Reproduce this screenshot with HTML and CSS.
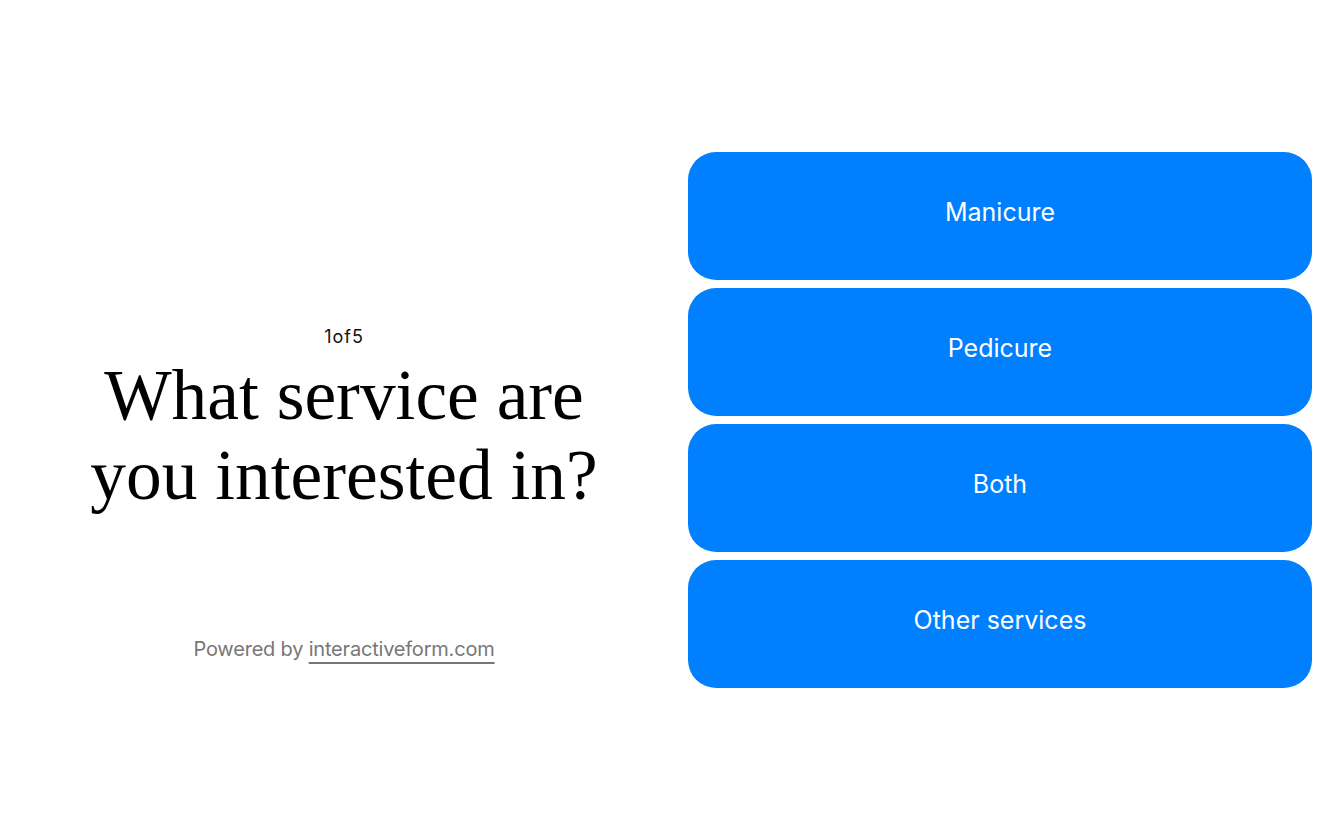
FILE: index.html
```html
<!DOCTYPE html>
<html>

<head>
    <meta charset="utf-8">
    <title>What service are you interested in?</title>
    <link rel="stylesheet" href="styles.css">
</head>

<body>
    <main class="form">
        <section class="question">
            <div class="question_body">
                <p class="step">1of5</p>
                <h1 class="title">What service are you interested in?</h1>
            </div>
            <p class="powered">Powered by <a href="#" class="powered_link">interactiveform.com</a></p>
        </section>
        <section class="answers">
            <button class="answer">Manicure</button>
            <button class="answer">Pedicure</button>
            <button class="answer">Both</button>
            <button class="answer">Other services</button>
        </section>
    </main>
</body>

</html>
```

FILE: styles.css
```css
html,
body {
    margin: 0;
    padding: 0;
    background: #ffffff
}

body {
    font-family: Inter, "Liberation Sans", sans-serif
}

.form {
    display: flex;
    align-items: center;
    height: 840px;
    padding-right: 32px
}

.question {
    width: 688px;
    display: flex;
    flex-direction: column;
    align-items: center;
    text-align: center;
    padding-top: 146px
}

.question_body {
    display: flex;
    flex-direction: column;
    align-items: center
}

.step {
    margin: 0;
    font-size: 18px;
    letter-spacing: 1px;
    color: #111111
}

.title {
    margin: 8px 0 0;
    font-family: "Liberation Serif", "Times New Roman", serif;
    font-weight: normal;
    font-size: 71.4px;
    line-height: 80px;
    color: #000000;
    width: 560px
}

.powered {
    margin: 122px 0 0;
    font-size: 20px;
    letter-spacing: -0.2px;
    color: #777777
}

.powered_link {
    color: #777777;
    text-decoration: underline;
    text-decoration-thickness: 2px;
    text-underline-offset: 6px
}

.answers {
    flex: 1;
    display: flex;
    flex-direction: column;
    gap: 8px
}

.answer {
    height: 128px;
    padding: 0 0 8px;
    border: none;
    border-radius: 28px;
    background: #007fff;
    color: #ffffff;
    font-family: Inter, "Liberation Sans", sans-serif;
    font-size: 25px;
    cursor: pointer
}

.answer:hover {
    background: #0070e6
}
```
